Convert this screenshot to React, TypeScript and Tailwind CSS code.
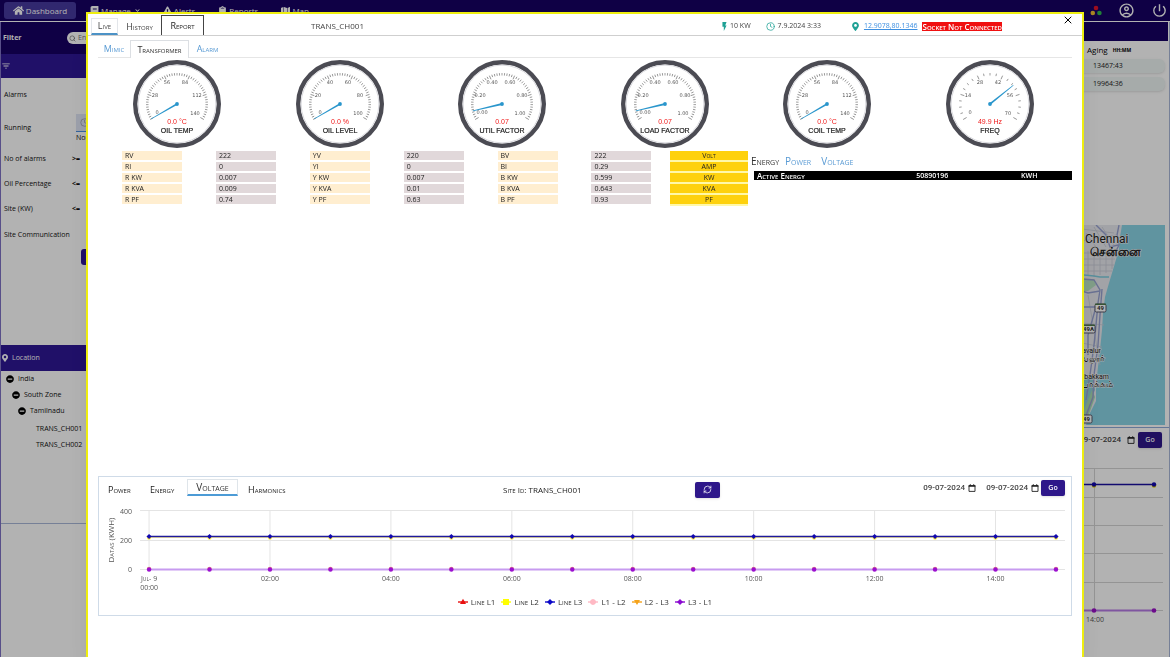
import React from "react";
import {
  FaBook,
  FaChevronDown,
  FaClipboard,
  FaExclamationTriangle,
  FaHome,
  FaMap,
  FaMapMarkerAlt,
  FaMinusCircle,
} from "react-icons/fa";
import { IoMdFlash } from "react-icons/io";
import { MdFilterList, MdOutlineAccountCircle, MdPowerSettingsNew } from "react-icons/md";
import { Clock, RefreshCw, Search, X } from "lucide-react";

const smallCaps = "[font-variant:small-caps]";

function NavItem({ icon, label, children }: { icon: React.ReactNode; label: string; children?: React.ReactNode }) {
  return (
    <button type="button" className="flex items-center gap-[2px] text-[8px] leading-[12px] text-white">
      {icon}
      <span>{label}</span>
      {children}
    </button>
  );
}

function TopNav() {
  return (
    <header className="flex h-[21px] shrink-0 items-center bg-[#160064] pl-1 pr-[2px]">
      <button
        type="button"
        className="flex h-[17px] w-[72px] items-center justify-center gap-[2px] rounded-[3px] bg-[#473aa0] text-[8px] text-white"
      >
        <FaHome className="size-[11px]" />
        <span>Dashboard</span>
      </button>
      <nav className="ml-[14px] flex flex-1 items-center gap-[23px]">
        <NavItem icon={<FaBook className="size-[9px]" />} label="Manage">
          <FaChevronDown className="ml-[2px] size-[5px]" />
        </NavItem>
        <NavItem icon={<FaExclamationTriangle className="size-[9px]" />} label="Alerts" />
        <NavItem icon={<FaClipboard className="size-[9px]" />} label="Reports" />
        <NavItem icon={<FaMap className="size-[9px]" />} label="Map" />
      </nav>
      <div className="flex items-center gap-[16px] text-white">
        <svg viewBox="0 0 12 12" className="size-[12px]" aria-hidden="true">
          <circle cx="6" cy="3" r="2.3" fill="#e0142c" />
          <circle cx="2.8" cy="8" r="2.3" fill="#f0c030" />
          <circle cx="9.4" cy="8" r="2.3" fill="#2fb950" />
        </svg>
        <button type="button" aria-label="Account">
          <MdOutlineAccountCircle className="size-[17px]" />
        </button>
        <button type="button" aria-label="Log out">
          <MdPowerSettingsNew className="size-[17px]" />
        </button>
      </div>
    </header>
  );
}

function FilterRow({ label, op, className }: { label: string; op?: string; className: string }) {
  return (
    <div className={"flex items-center pl-[3px] " + className}>
      <span className="w-[68px] shrink-0 whitespace-nowrap">{label}</span>
      {op && <span className="font-bold">{op}</span>}
    </div>
  );
}

const tree = [
  { label: "India", pad: "pl-[5px]" },
  { label: "South Zone", pad: "pl-[11px]" },
  { label: "Tamilnadu", pad: "pl-[17px]" },
];

function Sidebar() {
  return (
    <aside className="w-[170px] shrink-0 border-l border-[#7f72c4] text-[7px] leading-[10px] text-[#111]">
      <div className="flex h-[32px] items-center bg-[#160064] pl-[2px] text-white">
        <label htmlFor="filter-search" className="w-[64px] font-bold">
          Filter
        </label>
        <div className="flex h-[12px] w-[80px] items-center gap-[2px] rounded-full bg-white px-[2px] text-[#555]">
          <Search className="size-[7px]" />
          <input
            id="filter-search"
            placeholder="Enter Site Id"
            className="min-w-0 flex-1 text-[7px] outline-none placeholder:text-[#777]"
          />
        </div>
      </div>
      <div className="flex h-[24px] items-center bg-[#2e1796] text-white">
        <MdFilterList className="size-[10px]" />
      </div>
      <div className="flex flex-col pt-px">
        <FilterRow label="Alarms" className="h-[32px]" />
        <div className="flex h-[34px] items-center pl-[3px]">
          <span className="w-[72px]">Running</span>
          <div>
            <div className="mb-px flex h-[18px] w-[30px] items-center border-b border-[#4a8fe0] bg-[#dfe5f5] pl-[4px] text-[#99a]">
              <Clock className="size-[9px]" />
            </div>
            <span className="block h-[10px] leading-[10px]">Normal</span>
          </div>
        </div>
        <FilterRow label="No of alarms" op=">=" className="h-[28px]" />
        <FilterRow label="Oil Percentage" op="<=" className="h-[22px]" />
        <FilterRow label="Site (KW)" op="<=" className="h-[28px]" />
        <FilterRow label="Site Communication" className="h-[24px]" />
        <button type="button" className="ml-[80px] mt-[2px] h-[16px] w-[32px] rounded-[3px] bg-[#2e1796] text-white">
          Go
        </button>
      </div>
      <div className="mt-[80px] flex h-[26px] items-center gap-[3px] bg-[#2e1796] text-white">
        <FaMapMarkerAlt className="size-[8px]" />
        <span>Location</span>
      </div>
      <ul className="h-[153px] border-b border-[#a9b8d8] leading-[16px]">
        {tree.map((n) => (
          <li key={n.label} className={"flex h-[16px] items-center gap-[4px] " + n.pad}>
            <FaMinusCircle className="size-[8px] text-black" />
            <span>{n.label}</span>
          </li>
        ))}
        <li className="pl-[35px] pt-[2px]">TRANS_CH001</li>
        <li className="pl-[35px]">TRANS_CH002</li>
      </ul>
    </aside>
  );
}

function MapView() {
  return (
    <svg viewBox="0 0 149 200" preserveAspectRatio="xMaxYMin slice" className="block h-[200px] w-full">
      <rect width="149" height="200" fill="#8ad4e6" />
      <path
        d="M0 0 H106 L104 12 L103 24 L99 38 L96 48 L93 58 L89 72 L87 88 L86 105 L84 125 L82 142 L80 160 L80 176 L74 188 L70 200 H0Z"
        fill="#e9eaef"
      />
      <path d="M60 55 L78 54 L80 60 L72 66 L60 66Z" fill="#b8e3c2" />
      <path d="M68 155 L77 150 L79 165 L70 185 L66 185Z" fill="#8ed0d8" />
      <path d="M66 190 L76 165 L79 172 L72 192Z" fill="#a9dcb4" />
      <g stroke="#c8ccd8" strokeWidth="0.8" fill="none">
        <path d="M64 28 H102 M66 34 H99 M66 40 H98 M66 46 H96 M72 26 V50 M78 24 V52 M84 24 V50 M90 24 V48 M96 24 V44" />
        <path d="M70 8 L80 22 M78 2 L90 22 M86 2 L98 20 M66 16 L100 10 M66 4 L98 8" />
        <path d="M66 98 L88 100 M66 118 L86 122 M72 70 L84 140" />
      </g>
      <path d="M68 50 L78 51 L84 52 L93 52" stroke="#7fcde0" strokeWidth="1.6" fill="none" />
      <g stroke="#98a3d2" strokeWidth="1.4" fill="none">
        <path d="M80 0 L90 10 L94 22 L102 20" />
        <path d="M103 0 L101 10 L103 20 L97 32" />
        <path d="M67 54 L78 55 L84 65 L82 78 L80 100 L78 120 L74 150 L70 175" />
        <path d="M86 64 L84 90 L82 120 L78 150 L77 172 L68 196" />
        <path d="M66 66 L72 68 L84 66 M66 82 L80 82 L72 110 L72 130" />
      </g>
      <g fontFamily="Roboto, sans-serif" fill="#222" stroke="#f4f4f6" strokeWidth="1" paintOrder="stroke">
        <text x="69" y="18" fontSize="12">Chennai</text>
        <text x="125" y="31" fontSize="12" fontWeight="bold" textAnchor="end">சென்னை</text>
        <text x="85" y="128" fontSize="7" textAnchor="end">Navalur</text>
        <text x="89" y="136" fontSize="9" textAnchor="end">நாவலூர்</text>
        <text x="93" y="154" fontSize="7" textAnchor="end">Kelambakkam</text>
        <text x="97" y="162" fontSize="9" textAnchor="end">கேளம்பாக்கம்</text>
      </g>
      <g fontFamily="Roboto, sans-serif" fontSize="6" fontWeight="bold" textAnchor="middle" fill="#333">
        <rect x="79" y="79" width="11" height="8" rx="1.5" fill="#fff" stroke="#556" />
        <path d="M79 79.3 H90" stroke="#4f7a4c" strokeWidth="1.4" />
        <text x="84.5" y="85.4">49</text>
        <rect x="66" y="100" width="13" height="8" rx="1.5" fill="#fff" stroke="#556" />
        <path d="M66 100.3 H79" stroke="#4f7a4c" strokeWidth="1.4" />
        <text x="72.5" y="106.4">49A</text>
        <rect x="65" y="190" width="11" height="8" rx="1.5" fill="#fff" stroke="#556" />
        <text x="70.5" y="196.2">49</text>
      </g>
    </svg>
  );
}

function DateField({ label, gap }: { label: string; gap: string }) {
  return (
    <div className={"flex items-center " + gap}>
      <input
        aria-label={label}
        defaultValue="09-07-2024"
        className="h-[14px] w-[50px] bg-transparent text-right font-['Roboto',sans-serif] text-[8px] font-medium leading-[14px] text-[#444] outline-none"
      />
      <svg viewBox="0 0 8 8" className="size-[8px]" aria-hidden="true">
        <path d="M1 1.6 H7 V7.4 H1Z" fill="none" stroke="#222" strokeWidth="0.9" />
        <path d="M0.6 1.2 H7.4 V2.8 H0.6Z M1.8 0.3 H2.8 V1.5 H1.8Z M5.2 0.3 H6.2 V1.5 H5.2Z" fill="#222" />
      </svg>
    </div>
  );
}

function GoButton() {
  return (
    <button
      type="button"
      className="h-[16px] w-[24px] rounded-[2px] bg-[#2e178a] text-[7px] font-semibold leading-[10px] text-white shadow-sm"
    >
      Go
    </button>
  );
}

function RightColumn() {
  return (
    <aside className="flex w-[154px] shrink-0 flex-col border-r border-[#a9b8d8] text-[7px] leading-[10px] text-[#222]">
      <div className="h-[19px] border-r border-white bg-[#160064]" />
      <div className="flex h-[184px] flex-col gap-[4px] pr-[4px] pt-[4px]">
        <div className="flex h-[10px] items-center gap-[5px] pl-[71px] text-[8px] text-black">
          Aging <span className="text-[5px] font-bold">HH:MM</span>
        </div>
        <div className="rounded-r-[6px] bg-[#eef5f4] py-[2px] pl-[77px] shadow-sm">13467:43</div>
        <div className="rounded-r-[6px] bg-[#eef5f4] py-[2px] pl-[77px] shadow-sm">19964:36</div>
      </div>
      <div className="border-b border-[#8fa9d8] pb-[2px] pr-[4px]">
        <MapView />
      </div>
      <div className="flex items-center justify-end gap-[3px] pr-[7px] pt-[4px]">
        <DateField label="Date" gap="gap-[6px]" />
        <GoButton />
      </div>
      <div className="mt-[16px] pr-[4px]">
        <svg viewBox="0 0 149 180" className="block w-full">
          <g stroke="#d5d5d5" strokeWidth="1">
            <path d="M0 4.5 H147 M0 33.5 H147 M0 61.5 H147 M0 89.5 H147 M0 118.5 H147 M0 146.5 H147 M78.5 4 V147" />
          </g>
          <path d="M0 146.5 H138" stroke="#b77be6" strokeWidth="2" />
          <path d="M0 20.5 H138" stroke="#1a10a0" strokeWidth="1.5" />
          {[78, 138].map((x) => (
            <g key={x}>
              <circle cx={x} cy="21.5" r="2.3" fill="#f0e000" />
              <circle cx={x} cy="20.5" r="2.2" fill="#1208b0" />
              <circle cx={x} cy="146.5" r="2.3" fill="#9b10c8" />
            </g>
          ))}
          <text x="79" y="158" fontSize="7" textAnchor="middle" fill="#555">
            14:00
          </text>
        </svg>
      </div>
    </aside>
  );
}

type GaugeData = {
  name: string;
  value: string;
  fraction: number;
  labels: string[];
  ticks: number;
};

const gauges: GaugeData[] = [
  { name: "OIL TEMP", value: "0.0 °C", fraction: 0, labels: ["0", "28", "56", "84", "112", "140"], ticks: 50 },
  { name: "OIL LEVEL", value: "0.0 %", fraction: 0, labels: ["0", "20", "40", "60", "80", "100"], ticks: 50 },
  { name: "UTIL FACTOR", value: "0.07", fraction: 0.07, labels: ["0.00", "0.20", "0.40", "0.60", "0.80", "1.00"], ticks: 50 },
  { name: "LOAD FACTOR", value: "0.07", fraction: 0.07, labels: ["0.00", "0.20", "0.40", "0.60", "0.80", "1.00"], ticks: 50 },
  { name: "COIL TEMP", value: "0.0 °C", fraction: 0, labels: ["0", "28", "56", "84", "112", "140"], ticks: 50 },
  { name: "FREQ", value: "49.9 Hz", fraction: 0.713, labels: ["0", "14", "28", "42", "56", "70"], ticks: 20 },
];

const labelSpots = [
  [-20, 10],
  [-22, -7],
  [-10, -20],
  [8, -20],
  [20, -7],
  [18, 11],
];

function Gauge({ g }: { g: GaugeData }) {
  const needle = -120 + g.fraction * 240;
  return (
    <svg viewBox="-44 -44 88 88" className="size-[88px]" role="img" aria-label={g.name}>
      <circle r="41.8" fill="#fff" stroke="#4b4b53" strokeWidth="4.4" />
      <circle r="38.9" fill="none" stroke="#d9d9de" strokeWidth="1" />
      {Array.from({ length: g.ticks + 1 }, (_, i) => (
        <line
          key={i}
          y1={i % (g.ticks / 5) === 0 ? -27 : -28.5}
          y2="-31"
          stroke="#777"
          strokeWidth="0.7"
          transform={"rotate(" + (-120 + (i * 240) / g.ticks) + ")"}
        />
      ))}
      <g fontFamily="DejaVu Sans, sans-serif" fontSize="5" fill="#555" textAnchor="middle">
        {g.labels.map((l, i) => (
          <text key={l} x={labelSpots[i][0]} y={labelSpots[i][1]}>
            {l}
          </text>
        ))}
      </g>
      <g transform={"rotate(" + needle + ")"}>
        <path d="M-0.9 0 L-0.3 -30 H0.3 L0.9 0Z" fill="#2a96cc" />
      </g>
      <circle r="1.9" fill="#2a96cc" />
      <g fontFamily="Liberation Sans, sans-serif" fontSize="7" textAnchor="middle">
        <text y="20" fill="#f01818">
          {g.value}
        </text>
        <text y="29" fill="#222" stroke="#222" strokeWidth="0.2">
          {g.name}
        </text>
      </g>
    </svg>
  );
}

const readings = [
  ["RV", "222", "YV", "220", "BV", "222", "Volt"],
  ["RI", "0", "YI", "0", "BI", "0.29", "AMP"],
  ["R KW", "0.007", "Y KW", "0.007", "B KW", "0.599", "KW"],
  ["R KVA", "0.009", "Y KVA", "0.01", "B KVA", "0.643", "KVA"],
  ["R PF", "0.74", "Y PF", "0.63", "B PF", "0.93", "PF"],
];

function ReadingsTable() {
  return (
    <table className="w-[626px] table-fixed border-collapse text-[7px] leading-[9px] text-[#222]">
      <colgroup>
        <col className="w-[15%]" />
        <col className="w-[15%]" />
        <col className="w-[15%]" />
        <col className="w-[15%]" />
        <col className="w-[15%]" />
        <col />
        <col className="w-[78px]" />
      </colgroup>
      <tbody>
        {readings.map((row, r) => (
          <tr key={r}>
            {row.map((cell, c) =>
              c === 6 ? (
                <td key={c} className="bg-[#fff8a8] p-0 pb-[2px]">
                  <div className={"h-[9px] bg-[#fed10d] text-center " + smallCaps}>{cell}</div>
                </td>
              ) : (
                <td key={c} className="p-0 pb-[2px]">
                  <div className={"h-[9px] w-[60px] pl-[3px] " + (c % 2 === 0 ? "bg-[#ffeed0]" : "bg-[#e1d8da]")}>
                    {cell}
                  </div>
                </td>
              ),
            )}
          </tr>
        ))}
      </tbody>
    </table>
  );
}

function EnergyPanel() {
  return (
    <section className="ml-[3px] flex-1">
      <div className="flex h-[20px] items-center gap-[6px] text-[10px] leading-[12px]">
        <button type="button" className={"text-[#333] " + smallCaps}>Energy</button>
        <button type="button" className={"text-[#5a9bd4] " + smallCaps}>Power</button>
        <button type="button" className={"ml-[4px] text-[#5a9bd4] " + smallCaps}>Voltage</button>
      </div>
      <table className="ml-[3px] w-[calc(100%-3px)] table-fixed border-collapse bg-black text-[7px] font-semibold leading-[9px] text-white">
        <tbody>
          <tr>
            <td className={"w-[51%] p-0 pl-[3px] text-[8px] " + smallCaps}>Active Energy</td>
            <td className="w-[33%] p-0">50890196</td>
            <td className="p-0">KWH</td>
          </tr>
        </tbody>
      </table>
    </section>
  );
}

const hours = Array.from({ length: 16 }, (_, i) => 50 + i * 60.4);

function VoltageChart() {
  return (
    <svg viewBox="0 0 971 94" className="block w-full" role="img" aria-label="Voltage">
      <g stroke="#e4e4e4" strokeWidth="1">
        <path d="M41 9.5 H965 M41 39.5 H965 M41 68.5 H965" />
        {hours.map((x, i) => (i % 2 === 0 ? <path key={i} d={"M" + x + " 9.5 V68.5"} /> : null))}
      </g>
      <path d="M50 68.5 H956" stroke="#c79bf0" strokeWidth="2" />
      <path d="M50 36.5 H956" stroke="#fff39a" strokeWidth="1" />
      <path d="M50 35.5 H956" stroke="#1f1a9c" strokeWidth="1.5" />
      {hours.map((x) => (
        <g key={x}>
          <circle cx={x} cy="36.7" r="2.1" fill="#fff04a" />
          <path d={"M" + (x - 2.6) + " 35.5 L" + x + " 33 L" + (x + 2.6) + " 35.5 L" + x + " 38Z"} fill="#1208b0" />
          <circle cx={x} cy="67.8" r="2.2" fill="#f5a47a" />
          <circle cx={x} cy="68.5" r="2.2" fill="#9b10d0" />
        </g>
      ))}
      <g fontSize="7" fill="#555">
        <g textAnchor="end">
          <text x="33" y="13">400</text>
          <text x="33" y="42">200</text>
          <text x="33" y="71">0</text>
        </g>
        <g textAnchor="middle">
          <text x="50" y="80" className={smallCaps}>Jul- 9</text>
          <text x="50" y="89">00:00</text>
          {["02:00", "04:00", "06:00", "08:00", "10:00", "12:00", "14:00"].map((t, i) => (
            <text key={t} x={hours[(i + 1) * 2]} y="80">
              {t}
            </text>
          ))}
          <text transform="translate(15 39) rotate(-90)" fontSize="8" className={smallCaps}>
            Datas (KWH)
          </text>
        </g>
      </g>
    </svg>
  );
}

const legend = [
  { label: "Line L1", color: "#e81010", mark: "M5 0.8 L8 6 H2Z" },
  { label: "Line L2", color: "#ffff00", mark: "M2 1 H8 V7 H2Z" },
  { label: "Line L3", color: "#0c08c8", mark: "M5 1 L8 4 L5 7 L2 4Z" },
  { label: "L1 - L2", color: "#ffb9c4", mark: "M5 1 A3 3 0 1 1 4.99 1Z" },
  { label: "L2 - L3", color: "#f5a31a", mark: "M2 2 H8 L5 7Z" },
  { label: "L3 - L1", color: "#8a0ad0", mark: "M5 1 L8 4 L5 7 L2 4Z" },
];

function ChartPanel() {
  const tab = "h-[12px] text-[9px] leading-[12px] text-[#222] " + smallCaps;
  return (
    <section className="mx-[10px] mb-[41px] mt-auto border border-[#cfdbe8]">
      <div className="flex h-[24px] items-start">
        <div className="flex flex-1 items-start pl-[9px]">
          <button type="button" className={"mt-[7px] w-[42px] text-left " + tab}>Power</button>
          <button type="button" className={"mt-[7px] w-[37px] text-left " + tab}>Energy</button>
          <button
            type="button"
            className={"mt-[2px] h-[17px] w-[51px] border border-b-2 border-[#dfe5ea] border-b-[#4c9bd6] text-[10px] leading-[12px] text-[#333] " + smallCaps}
          >
            Voltage
          </button>
          <button type="button" className={"ml-[10px] mt-[7px] " + tab}>Harmonics</button>
        </div>
        <div className="ml-[25px] mt-[7px] w-[73px] whitespace-nowrap text-[8px] leading-[12px] text-[#222]">
          <span className={smallCaps}>Site Id:</span> TRANS_CH001
        </div>
        <div className="flex flex-1 items-start justify-between pl-[119px] pr-[6px]">
          <button
            type="button"
            aria-label="Refresh"
            className="mt-[5px] flex h-[16px] w-[25px] items-center justify-center rounded-[2px] bg-[#2e178a] text-white shadow-sm"
          >
            <RefreshCw className="size-[9px]" />
          </button>
          <div className="mt-[3px] flex items-center gap-[2px]">
            <DateField label="From" gap="gap-[3px]" />
            <DateField label="To" gap="gap-[3px]" />
            <GoButton />
          </div>
        </div>
      </div>
      <VoltageChart />
      <ul className={"flex h-[20px] items-start justify-center gap-[6px] pt-px text-[8px] leading-[12px] text-[#333] " + smallCaps}>
        {legend.map((l) => (
          <li key={l.label} className="flex items-center gap-[3px]">
            <svg viewBox="0 0 10 8" className="h-[8px] w-[10px]" aria-hidden="true">
              <path d="M0 4 H10" stroke={l.color} strokeWidth="1.4" />
              <path d={l.mark} fill={l.color} />
            </svg>
            {l.label}
          </li>
        ))}
      </ul>
    </section>
  );
}

function SiteDialog() {
  return (
    <div
      role="dialog"
      aria-label="TRANS_CH001"
      className="fixed inset-x-[86px] bottom-0 top-[12px] flex flex-col border-2 border-b-0 border-[#eeee10] bg-white shadow-xl"
    >
      <div className="flex h-[22px] shrink-0 items-end border-b border-[#cfcfcf] pl-[3px] text-[7px] leading-[10px] text-[#444]">
        <button type="button" className={"h-[17px] w-[27px] border border-b-2 border-[#e3e6ea] border-b-[#4c92c6] text-[9px] " + smallCaps}>
          Live
        </button>
        <button type="button" className={"h-[17px] w-[43px] text-[9px] " + smallCaps}>History</button>
        <button type="button" className={"h-[20px] w-[43px] border border-b-0 border-[#444] text-[9px] text-[#222] " + smallCaps}>
          Report
        </button>
        <div className="flex h-[18px] flex-1 items-center">
          <h1 className="ml-[107px] flex-1 text-[8px]">TRANS_CH001</h1>
          <IoMdFlash className="size-[11px] text-[#1fa195]" />
          <span>10 KW</span>
          <Clock className="ml-[15px] size-[9px] text-[#1fa195]" />
          <span className="ml-[3px]">7.9.2024 3:33</span>
          <FaMapMarkerAlt className="ml-[30px] size-[9px] text-[#1fa195]" />
          <a href="#map" className="ml-[4px] text-[#3d8fe0] underline">12.9078,80.1346</a>
          <span className={"ml-[5px] bg-[#f01010] text-[8px] font-semibold leading-[9px] text-white " + smallCaps}>
            Socket Not Connected
          </span>
        </div>
        <button type="button" aria-label="Close" className="ml-[60px] mr-[8px] self-start">
          <X className="size-[12px] text-black" />
        </button>
      </div>
      <div className="mx-[10px] mt-[4px] flex h-[18px] shrink-0 items-end border-b border-[#e6e6e6] text-[9px] leading-[12px]">
        <button type="button" className={"h-[17px] w-[32px] text-[#5a9bd4] " + smallCaps}>Mimic</button>
        <button type="button" className={"-mb-px h-[18px] w-[59px] border border-b-0 border-[#dcdfe3] bg-white text-[#333] " + smallCaps}>
          Transformer
        </button>
        <button type="button" className={"h-[17px] w-[37px] text-[#5a9bd4] " + smallCaps}>Alarm</button>
      </div>
      <div className="ml-[8px] mr-[11px] mt-[2px] grid shrink-0 grid-cols-6 justify-items-center">
        {gauges.map((g) => (
          <Gauge key={g.name} g={g} />
        ))}
      </div>
      <div className="ml-[34px] mr-[10px] mt-[3px] flex shrink-0">
        <ReadingsTable />
        <EnergyPanel />
      </div>
      <ChartPanel />
    </div>
  );
}

export default function App() {
  return (
    <div className="flex h-screen flex-col overflow-hidden bg-white font-['Open_Sans','Noto_Sans',sans-serif]">
      <TopNav />
      <div className="flex flex-1 border-t border-white">
        <Sidebar />
        <main className="flex-1">
          <div className="h-[19px] bg-[#160064]" />
        </main>
        <RightColumn />
      </div>
      <div className="fixed inset-0 bg-black/30" />
      <SiteDialog />
    </div>
  );
}
